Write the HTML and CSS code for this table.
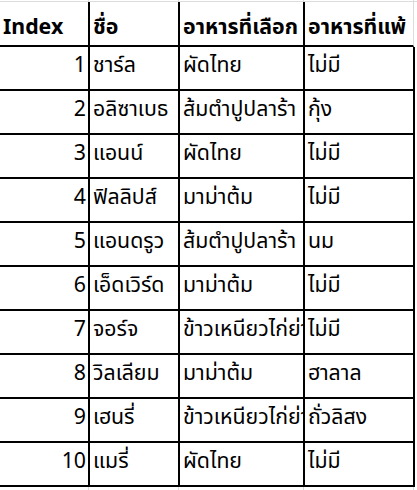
FILE: index.html
```html
<!DOCTYPE html>
<html lang="th">
<head>
<meta charset="utf-8">
<title>ตาราง</title>
<link rel="stylesheet" href="styles.css">
</head>
<body>
<div class="sheet">
  <div class="grid strip top"><div></div><div></div><div></div><div></div></div>
  <div class="rule"></div>
  <div class="grid">
    <div class="cell head">Index</div>
    <div class="cell head">ชื่อ</div>
    <div class="cell head">อาหารที่เลือก</div>
    <div class="cell head last">อาหารที่แพ้</div>

    <div class="cell num">1</div><div class="cell">ชาร์ล</div><div class="cell">ผัดไทย</div><div class="cell">ไม่มี</div>
    <div class="cell num">2</div><div class="cell">อลิซาเบธ</div><div class="cell">ส้มตำปูปลาร้า</div><div class="cell">กุ้ง</div>
    <div class="cell num">3</div><div class="cell">แอนน์</div><div class="cell">ผัดไทย</div><div class="cell">ไม่มี</div>
    <div class="cell num">4</div><div class="cell">ฟิลลิปส์</div><div class="cell">มาม่าต้ม</div><div class="cell">ไม่มี</div>
    <div class="cell num">5</div><div class="cell">แอนดรูว</div><div class="cell">ส้มตำปูปลาร้า</div><div class="cell">นม</div>
    <div class="cell num">6</div><div class="cell">เอ็ดเวิร์ด</div><div class="cell">มาม่าต้ม</div><div class="cell">ไม่มี</div>
    <div class="cell num">7</div><div class="cell">จอร์จ</div><div class="cell">ข้าวเหนียวไก่ย่าง</div><div class="cell">ไม่มี</div>
    <div class="cell num">8</div><div class="cell">วิลเลียม</div><div class="cell">มาม่าต้ม</div><div class="cell">ฮาลาล</div>
    <div class="cell num">9</div><div class="cell">เฮนรี่</div><div class="cell">ข้าวเหนียวไก่ย่าง</div><div class="cell">ถั่วลิสง</div>
    <div class="cell num">10</div><div class="cell">แมรี่</div><div class="cell">ผัดไทย</div><div class="cell">ไม่มี</div>
  </div>
  <div class="grid strip bottom"><div></div><div></div><div></div><div></div></div>
</div>
</body>
</html>
```
FILE: styles.css
```css
html, body {
  margin: 0;
  padding: 0;
  background: #ffffff;
}

.sheet {
  font-family: "Noto Sans", "Noto Sans Thai", "Noto Sans Thai UI", sans-serif;
  font-size: 21.3px;
  color: #000000;
}

.grid {
  display: grid;
  grid-template-columns: 90px 90px 125px 110px;
}

.strip > div {
  box-sizing: border-box;
  border-right: 1px solid #dcdcdc;
  margin-right: 1px;
}

.top > div { height: 1px; }
.bottom > div { height: 4px; }

.rule {
  height: 1px;
  background: #dcdcdc;
}

.cell {
  box-sizing: border-box;
  height: 44px;
  border-right: 2px solid #000000;
  border-bottom: 2px solid #000000;
  padding: 0 3px 9px 3px;
  display: flex;
  align-items: center;
  white-space: nowrap;
  overflow: hidden;
  line-height: 1;
}

.head {
  height: 45px;
  font-weight: 700;
  padding-top: 5px;
  padding-bottom: 0;
}

.head.last {
  border-right: 1px solid #dcdcdc;
  margin-right: 1px;
}

.num {
  justify-content: flex-end;
  padding-left: 0;
  padding-right: 2px;
}
```
